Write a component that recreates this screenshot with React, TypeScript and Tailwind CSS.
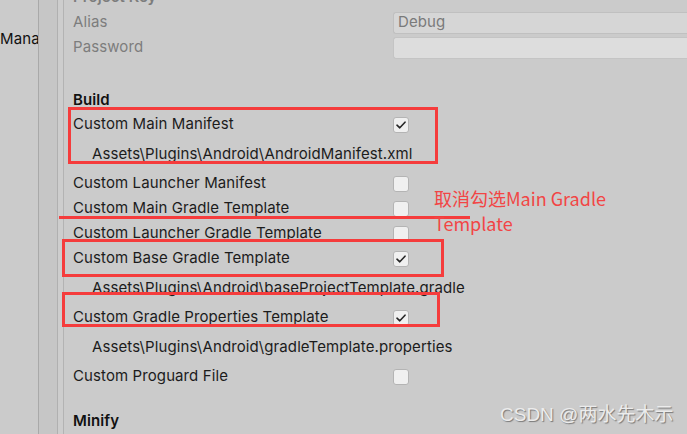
import React from "react";

const font = "font-['Inter','Noto_Sans',sans-serif]";

function Check({ on }: { on?: boolean }) {
    return (
        <div className="w-[16px] h-[16px] rounded-[3px] bg-[#f0f0f0] border border-[#b4b4b4] flex items-center justify-center">
            {on && (
                <svg width="10" height="8" viewBox="0 0 10 8">
                    <path d="M1 4.2 L3.8 6.8 L9 1.2" fill="none" stroke="#262626" strokeWidth="1.6" strokeLinecap="round" strokeLinejoin="round" />
                </svg>
            )}
        </div>
    );
}

function ToggleRow({ label, on }: { label: string; on?: boolean }) {
    return (
        <div className="h-[25px] flex items-center">
            <div className="w-[320px] shrink-0 whitespace-nowrap text-[#1c1c1c]">{label}</div>
            <Check on={on} />
        </div>
    );
}

function PathRow({ path }: { path: string }) {
    return <div className="h-[34px] flex items-center pl-[19px] whitespace-nowrap text-[#1c1c1c]">{path}</div>;
}

export default function App() {
    return (
        <div className={`relative w-[687px] h-[434px] overflow-hidden bg-[#cbcbcb] text-[15px] tracking-[0.1px] ${font}`}>
            <div className="flex h-full">
                {/* left sidebar */}
                <div className="w-[39px] shrink-0 border-r border-[#a9a9a9] overflow-hidden pt-[29px]">
                    <div className="whitespace-nowrap text-[#111] leading-[20px]">Mana</div>
                </div>
                <div className="w-[19px] shrink-0 bg-[#c6c6c6] border-r border-[#b0b0b0]" />
                <div className="w-[6px] shrink-0 bg-[#cdcdcd] border-r border-[#b3b3b3]" />

                {/* inspector */}
                <div className="flex-1 min-w-0 pl-[9px] -mt-[15px]">
                    <div className="h-[25px] flex items-center font-semibold text-[#7d7d7d]">Project Key</div>
                    <div className="h-[25px] flex items-center">
                        <div className="w-[320px] shrink-0 text-[#7d7d7d]">Alias</div>
                        <div className="flex-1 h-[22px] rounded-l-[3px] bg-[#d6d6d6] border border-[#c0c0c0] border-r-0 flex items-center px-[4px] text-[#7a7a7a]">Debug</div>
                    </div>
                    <div className="h-[25px] flex items-center">
                        <div className="w-[320px] shrink-0 text-[#7d7d7d]">Password</div>
                        <div className="flex-1 h-[22px] rounded-l-[3px] bg-[#dddddd] border border-[#c4c4c4] border-r-0" />
                    </div>

                    <div className="h-[28px]" />
                    <div className="h-[24px] flex items-center font-semibold text-[#111]">Build</div>

                    <ToggleRow label="Custom Main Manifest" on />
                    <PathRow path="Assets\Plugins\Android\AndroidManifest.xml" />
                    <ToggleRow label="Custom Launcher Manifest" />
                    <ToggleRow label="Custom Main Gradle Template" />
                    <ToggleRow label="Custom Launcher Gradle Template" />
                    <ToggleRow label="Custom Base Gradle Template" on />
                    <PathRow path="Assets\Plugins\Android\baseProjectTemplate.gradle" />
                    <ToggleRow label="Custom Gradle Properties Template" on />
                    <PathRow path="Assets\Plugins\Android\gradleTemplate.properties" />
                    <ToggleRow label="Custom Proguard File" />

                    <div className="h-[20px]" />
                    <div className="h-[24px] flex items-center font-semibold text-[#111]">Minify</div>
                </div>
            </div>

            {/* annotations */}
            <div className="absolute left-[68px] top-[107px] w-[370px] h-[57px] border-[3px] border-[#f53c3c]" />
            <div className="absolute left-[62px] top-[239px] w-[382px] h-[38px] border-[3px] border-[#f53c3c]" />
            <div className="absolute left-[62px] top-[292px] w-[378px] h-[35px] border-[3px] border-[#f53c3c]" />
            <div className="absolute left-[59px] top-[216px] w-[411px] h-[3px] bg-[#f53c3c]" />
            <div className="absolute left-[434px] top-[186px] text-[18px] leading-[25px] tracking-normal whitespace-nowrap text-[#f24545] font-['Noto_Sans_CJK_SC',sans-serif]">
                取消勾选Main Gradle
                <br />
                Template
            </div>

            {/* watermark */}
            <div className="absolute left-[500px] top-[401px] text-[19px] tracking-normal whitespace-nowrap text-[#ececec] [text-shadow:1px_1px_1px_#777] font-['Liberation_Sans','Noto_Sans_CJK_SC',sans-serif]">
                CSDN @两水先木示
            </div>
        </div>
    );
}
